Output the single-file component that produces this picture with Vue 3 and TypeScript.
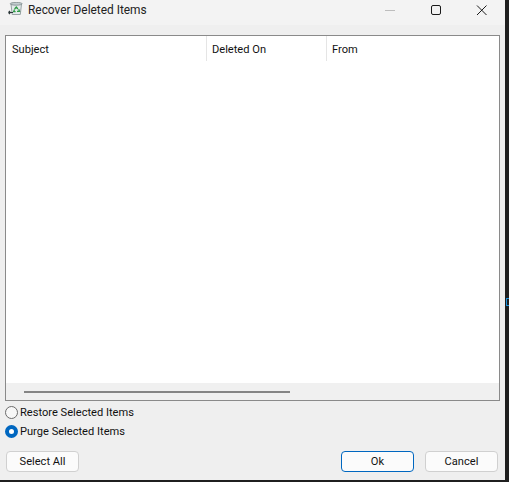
<script setup lang="ts">
import { ref } from 'vue'

const mode = ref('purge')
const columns = [
  { label: 'Subject', width: 201 },
  { label: 'Deleted On', width: 120 },
  { label: 'From', width: 172 }
]
</script>

<template>
  <div class="screen">
    <div class="dialog">
      <header class="titlebar">
        <svg class="app-icon" viewBox="0 0 15 16">
          <path d="M3 2h10.5l-1.2 10.5H4.2z" fill="#e4ebeb" stroke="#98a3a5" stroke-width="1" />
          <ellipse cx="8.2" cy="1.8" rx="6" ry="1.4" fill="#c3cdcf" stroke="#7f8a8c" stroke-width="0.8" />
          <path d="M6.6 7l1.7-2 1.6 2M10.7 7.2l.8 2.2H9M7.6 9.6H5.6l1-2.2" fill="none" stroke="#2f9a45" stroke-width="1.3" />
          <path d="M0.5 10.5h4.5M0.5 10.5l1.6-1.5M0.5 10.5l1.6 1.5" fill="none" stroke="#2a3638" stroke-width="1.1" />
        </svg>
        <span class="title">Recover Deleted Items</span>
        <div class="controls">
          <svg viewBox="0 0 46 24" class="ctl"><path d="M18 9.5h10" stroke="#bdbdbd" stroke-width="1" /></svg>
          <svg viewBox="0 0 46 24" class="ctl"><rect x="18.5" y="4.5" width="9" height="9" rx="1.5" fill="none" stroke="#1a1a1a" stroke-width="1" /></svg>
          <svg viewBox="0 0 46 24" class="ctl"><path d="M18 4.5l9.5 9.5M27.5 4.5L18 14" stroke="#1a1a1a" stroke-width="1" /></svg>
        </div>
      </header>

      <section class="list">
        <div class="head">
          <div v-for="col in columns" :key="col.label" class="col" :style="{ width: col.width + 'px' }">{{ col.label }}</div>
        </div>
        <div class="rows"></div>
        <div class="scrollbar"><div class="thumb"></div></div>
      </section>

      <div class="options">
        <label class="radio" @click="mode = 'restore'">
          <span class="dot" :class="{ on: mode === 'restore' }"></span>Restore Selected Items
        </label>
        <label class="radio" @click="mode = 'purge'">
          <span class="dot" :class="{ on: mode === 'purge' }"></span>Purge Selected Items
        </label>
      </div>

      <footer class="actions">
        <button class="btn">Select All</button>
        <div class="right">
          <button class="btn primary">Ok</button>
          <button class="btn">Cancel</button>
        </div>
      </footer>
    </div>
    <div class="edge"><span class="sliver"></span></div>
  </div>
</template>

<style>
html, body {
  margin: 0;
  background: #1f1f1f;
}
</style>

<style scoped>
.screen {
  display: flex;
  width: 509px;
  height: 482px;
  overflow: hidden;
  background: #1f1f1f;
  font-family: Roboto, "Noto Sans", sans-serif;
  font-size: 11.1px;
  color: #111;
}

.dialog {
  display: flex;
  flex-direction: column;
  width: 505px;
  height: 480px;
  background: #efefef;
}

.titlebar {
  display: flex;
  align-items: center;
  flex: none;
  height: 25px;
  padding: 0 0 6px 8px;
  box-sizing: border-box;
  background: #f3f3f3;
}

.app-icon {
  width: 15px;
  height: 16px;
  margin-right: 5px;
}

.title {
  font-size: 11.9px;
  color: #222;
}

.controls {
  display: flex;
  margin-left: auto;
  margin-bottom: -6px;
}

.ctl {
  display: block;
  width: 46px;
  height: 24px;
}

.list {
  display: flex;
  flex-direction: column;
  flex: none;
  width: 495px;
  height: 366px;
  margin: 10px 0 0 5px;
  box-sizing: border-box;
  border: 1px solid #8a8a8a;
  background: #fff;
}

.head {
  display: flex;
  flex: none;
  height: 25px;
}

.col {
  box-sizing: border-box;
  padding: 7px 0 0 6px;
  border-right: 1px solid #e5e5e5;
}

.col:last-child {
  border-right: none;
}

.col + .col {
  padding-left: 5px;
}

.rows {
  flex: 1;
}

.scrollbar {
  flex: none;
  display: flex;
  align-items: center;
  height: 17px;
  padding-left: 18px;
  background: #f0f0f0;
}

.thumb {
  width: 266px;
  height: 2px;
  background: #858585;
}

.options {
  display: flex;
  flex-direction: column;
  gap: 3px;
  margin: 4px 0 0 5px;
}

.radio {
  display: flex;
  align-items: center;
  gap: 2px;
  height: 16px;
  line-height: 16px;
}

.dot {
  flex: none;
  box-sizing: border-box;
  width: 13px;
  height: 13px;
  margin-top: -2px;
  border: 1px solid #6b6b6b;
  border-radius: 50%;
  background: #f7f7f7;
}

.dot.on {
  border: 4px solid #0067c0;
  background: #fff;
}

.actions {
  display: flex;
  justify-content: space-between;
  margin: 11px 7px 0 6px;
}

.right {
  display: flex;
  gap: 11px;
}

.btn {
  width: 73px;
  height: 21px;
  padding: 0;
  box-sizing: border-box;
  border: 1px solid #d0d0d0;
  border-radius: 4px;
  background: #fbfbfb;
  font: inherit;
  color: #111;
}

.btn.primary {
  border-color: #0067c0;
}

.edge {
  position: relative;
  flex: 1;
}

.sliver {
  position: absolute;
  top: 298px;
  left: 1px;
  width: 3px;
  height: 8px;
  box-sizing: border-box;
  border: 1px solid #1d8fd8;
  border-right: none;
}
</style>
